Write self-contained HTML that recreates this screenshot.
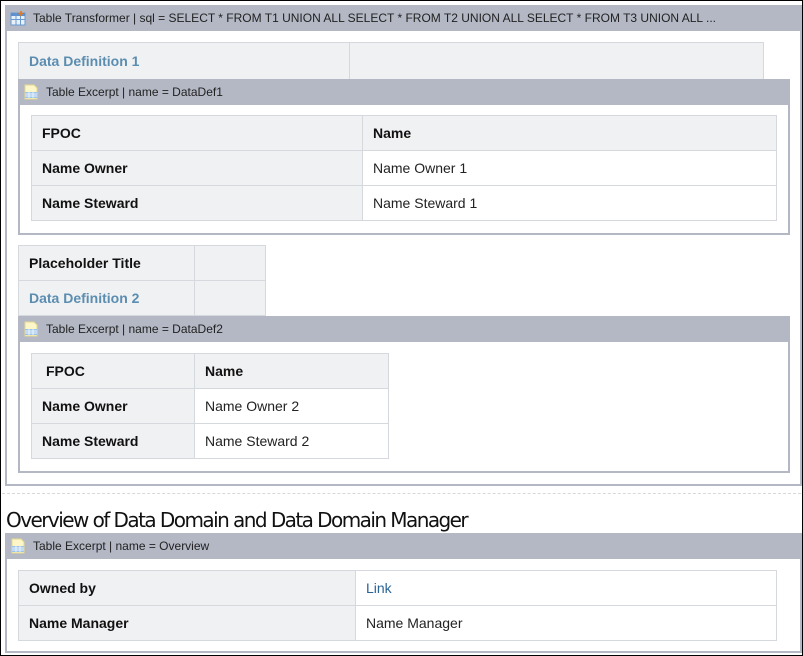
<!DOCTYPE html>
<html><head><meta charset="utf-8"><style>
*{box-sizing:border-box;margin:0;padding:0}
body{width:803px;height:656px;position:relative;background:#fff;font-family:"Liberation Sans",sans-serif;overflow:hidden}
.a{position:absolute}
.frame{border:1px solid #000;left:0;top:0;width:803px;height:656px}
.box{border:2px solid #b3b8c4;border-top:none;background:#fff}
.hdr{background:#b3b8c4;height:26px;font-size:12px;color:#222;line-height:26px;padding-left:28px;position:absolute;left:0;right:0;top:0}
.ico{position:absolute;left:5px;top:5px;width:16px;height:16px}
table{border-collapse:collapse;position:absolute;font-size:14px}
td{border:1px solid #d5d8dc;height:35px;padding:0 10px;vertical-align:middle}
td.h{background:#f0f1f3;font-weight:bold;color:#111}
td.v{color:#222}
.dd{color:#5b8db0!important}
</style></head><body>
<div class="a frame"></div>

<div class="a box" style="left:5px;top:5px;width:797px;height:481px">
 <div class="hdr" style="left:-2px;right:-2px">
  <svg class="ico" viewBox="0 0 16 16"><rect x="1" y="3" width="14" height="12" fill="#e8f0fa" stroke="#6a9ad0"/><rect x="1" y="3" width="14" height="3" fill="#5b8fd0"/><line x1="1" y1="9.5" x2="15" y2="9.5" stroke="#6a9ad0"/><line x1="6" y1="3" x2="6" y2="15" stroke="#6a9ad0"/><line x1="10.5" y1="3" x2="10.5" y2="15" stroke="#6a9ad0"/><path d="M11 1v5M8.5 3.5h5" stroke="#e07a20" stroke-width="1.6"/></svg>
  Table Transformer | sql = SELECT * FROM T1 UNION ALL SELECT * FROM T2 UNION ALL SELECT * FROM T3 UNION ALL ...</div>
</div>

<table style="left:18px;top:42px;width:746px"><tr><td class="h dd" style="width:331px;height:37px">Data Definition 1</td><td class="h"></td></tr></table>

<div class="a box" style="left:18px;top:79px;width:772px;height:156px">
 <div class="hdr" style="left:-2px;right:-2px">
  <svg class="ico" viewBox="0 0 16 16"><path d="M2 1h9l3 3v11H2z" fill="#fdf6c8" stroke="#e5d890"/><rect x="2" y="8" width="12" height="6" fill="#9cc4ea"/><path d="M2 10h12M2 12h12M6 8v6M10 8v6" stroke="#fff" stroke-width=".7"/></svg>
  Table Excerpt | name = DataDef1</div>
</div>
<table style="left:31px;top:115px;width:746px">
<tr><td class="h" style="width:331px">FPOC</td><td class="h">Name</td></tr>
<tr><td class="h">Name Owner</td><td class="v">Name Owner 1</td></tr>
<tr><td class="h">Name Steward</td><td class="v">Name Steward 1</td></tr></table>

<table style="left:18px;top:245px;width:248px">
<tr><td class="h" style="width:176px">Placeholder Title</td><td class="h"></td></tr>
<tr><td class="h dd">Data Definition 2</td><td class="h"></td></tr></table>

<div class="a box" style="left:18px;top:316px;width:772px;height:157px">
 <div class="hdr" style="left:-2px;right:-2px">
  <svg class="ico" viewBox="0 0 16 16"><path d="M2 1h9l3 3v11H2z" fill="#fdf6c8" stroke="#e5d890"/><rect x="2" y="8" width="12" height="6" fill="#9cc4ea"/><path d="M2 10h12M2 12h12M6 8v6M10 8v6" stroke="#fff" stroke-width=".7"/></svg>
  Table Excerpt | name = DataDef2</div>
</div>
<table style="left:31px;top:353px;width:358px">
<tr><td class="h" style="width:163px;padding-left:14px">FPOC</td><td class="h">Name</td></tr>
<tr><td class="h">Name Owner</td><td class="v">Name Owner 2</td></tr>
<tr><td class="h">Name Steward</td><td class="v">Name Steward 2</td></tr></table>

<div class="a" style="left:2px;top:493px;width:799px;border-top:1px dashed #d8d8d8"></div>
<div class="a" style="left:6px;top:508px;font-size:20px;color:#111;font-family:'DejaVu Sans','Liberation Sans',sans-serif;letter-spacing:-1.55px;white-space:nowrap">Overview of Data Domain and Data Domain Manager</div>

<div class="a box" style="left:5px;top:533px;width:797px;height:120px">
 <div class="hdr" style="left:-2px;right:-2px">
  <svg class="ico" viewBox="0 0 16 16"><path d="M2 1h9l3 3v11H2z" fill="#fdf6c8" stroke="#e5d890"/><rect x="2" y="8" width="12" height="6" fill="#9cc4ea"/><path d="M2 10h12M2 12h12M6 8v6M10 8v6" stroke="#fff" stroke-width=".7"/></svg>
  Table Excerpt | name = Overview</div>
</div>
<table style="left:18px;top:570px;width:759px">
<tr><td class="h" style="width:337px">Owned by</td><td class="v" style="color:#2a6496">Link</td></tr>
<tr><td class="h">Name Manager</td><td class="v">Name Manager</td></tr></table>
</body></html>
